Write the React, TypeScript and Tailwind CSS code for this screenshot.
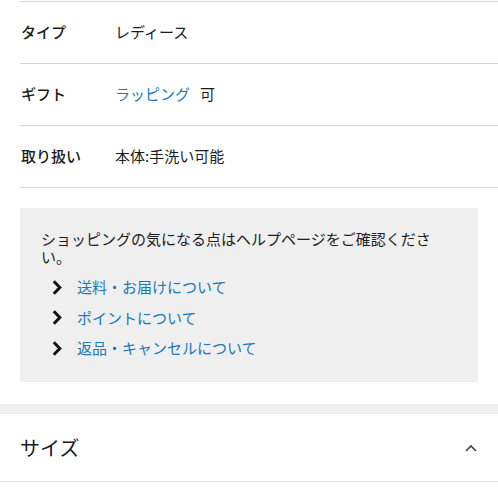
import React from "react";

const rows: { label: string; value: React.ReactNode }[] = [
  { label: "タイプ", value: "レディース" },
  {
    label: "ギフト",
    value: (
      <>
        <span className="text-[#2178b8]">ラッピング</span>
        <span className="ml-[10px]">可</span>
      </>
    ),
  },
  { label: "取り扱い", value: "本体:手洗い可能" },
];

const links = ["送料・お届けについて", "ポイントについて", "返品・キャンセルについて"];

function Chevron() {
  return (
    <svg width="10" height="15" viewBox="0 0 10 15" className="shrink-0">
      <path d="M1.8 1.2 L7.8 7.5 L1.8 13.8" fill="none" stroke="#111" strokeWidth="3" />
    </svg>
  );
}

export default function App() {
  return (
    <div
      className="w-[498px] h-[498px] overflow-hidden bg-white text-[#1c1c1c]"
      style={{ fontFamily: '"Noto Sans CJK JP", "Noto Sans", sans-serif' }}
    >
      <div className="pt-px pl-5">
        <div className="border-t border-[#d4d4d4]">
          {rows.map((r) => (
            <div key={r.label} className="h-[62px] flex items-center border-b border-[#d4d4d4] text-[15px]">
              <div className="w-[95px] pl-px font-medium">{r.label}</div>
              <div className="flex items-center">{r.value}</div>
            </div>
          ))}
        </div>
      </div>

      <div className="mx-5 mt-5 h-[174px] bg-[#efefef] pl-[21px] pr-[36px] pt-[22px] text-[15px]">
        <p className="leading-[18px]">ショッピングの気になる点はヘルプページをご確認ください。</p>
        <ul className="mt-[6px] pl-[11px]">
          {links.map((l) => (
            <li key={l} className="h-[30.5px] flex items-center gap-[15px]">
              <Chevron />
              <span className="text-[#2178b8]">{l}</span>
            </li>
          ))}
        </ul>
      </div>

      <div className="mt-[22px] h-[10px] bg-[#efefef]" />

      <div className="h-[68px] flex items-center justify-between pl-5 pr-[20px] border-b border-[#e2e2e2]">
        <span className="text-[20px]">サイズ</span>
        <svg width="14" height="10" viewBox="0 0 14 10">
          <path d="M2 8 L7 3 L12 8" fill="none" stroke="#444" strokeWidth="1.6" />
        </svg>
      </div>
    </div>
  );
}
